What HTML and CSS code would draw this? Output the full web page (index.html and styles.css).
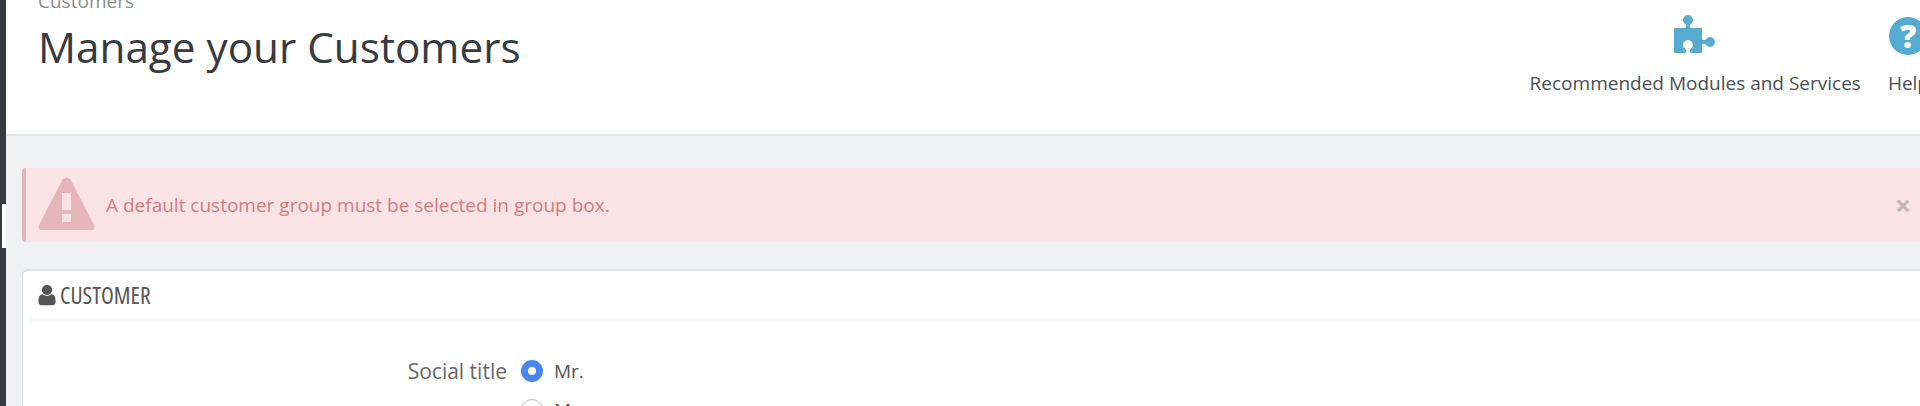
FILE: index.html
```html
<!DOCTYPE html>
<html lang="en">

<head>
    <meta charset="UTF-8">
    <title>Manage your Customers</title>
    <link rel="stylesheet" href="styles.css">
</head>

<body>
    <nav class="sidebar">
        <span class="sidebar-tab"></span>
    </nav>

    <div class="main">
        <header class="page-head">
            <div class="page-title">
                <div class="breadcrumb">Customers</div>
                <h1>Manage your Customers</h1>
            </div>
            <div class="toolbar">
                <a class="tool">
                    <svg class="tool-icon" viewBox="0 0 42 40" width="42" height="40">
                        <path fill="#55acd0" d="M0 14Q0 13 1 13H10.5Q12 13 12 11.5V9.6A5 5 0 1 1 16 9.6V11.5Q16 13 17.5 13H28V24Q28 25 29.5 25H31.4A5 5 0 1 1 31.4 29H29.5Q28 29 28 30V38H17.5Q16 38 16 36.5V34.6A5 5 0 1 0 12 34.6V36.5Q12 38 10.5 38H0Z"/>
                    </svg>
                    <span>Recommended Modules and Services</span>
                </a>
                <a class="tool">
                    <span class="help-icon">?</span>
                    <span>Help</span>
                </a>
            </div>
        </header>

        <section class="content">
            <div class="alert">
                <svg class="alert-icon" viewBox="0 0 57 53" width="57" height="53">
                    <path fill="#e4b6ba" d="M24.500 2.500Q28.500 -1 32.500 2.500L56 48Q58 53 53 53H4Q-1 53 1 48Z"/>
                    <rect x="24" y="16" width="9" height="17" fill="#fae3e4"/>
                    <rect x="24" y="37" width="9" height="8" fill="#fae3e4"/>
                </svg>
                <span class="alert-text">A default customer group must be selected in group box.</span>
                <span class="alert-close">×</span>
            </div>

            <div class="panel">
                <div class="panel-heading">
                    <svg viewBox="0 0 1792 1792" width="24" height="24">
                        <path fill="#555" d="M1536 1399q0 109-62.500 187t-150.500 78h-854q-88 0-150.500-78t-62.500-187q0-85 8.500-160.500t31.500-151.500 58.500-130 94-88.500 134.500-34.500q131 128 313 128t313-128q76 0 134.500 34.500t94 88.500 58.500 130 31.500 151.500 8.500 160.500zm-256-887q0 159-112.500 271.500t-271.500 112.500-271.500-112.500-112.500-271.500 112.500-271.500 271.500-112.500 271.500 112.500 112.500 271.500z"/>
                    </svg>
                    <span class="panel-title">CUSTOMER</span>
                </div>
                <div class="form-row">
                    <label class="form-label">Social title</label>
                    <div class="radios">
                        <div class="radio"><span class="radio-dot checked"></span>Mr.</div>
                        <div class="radio"><span class="radio-dot"></span>Mrs.</div>
                    </div>
                </div>
            </div>
        </section>
    </div>
</body>

</html>
```

FILE: styles.css
```css
* {
    box-sizing: border-box;
}

html,
body {
    height: 406px;
    margin: 0;
    overflow: hidden;
}

body {
    display: flex;
    font-family: "Open Sans", sans-serif;
    background-color: #eff1f2;
    color: #363a41;
}

.sidebar {
    position: relative;
    width: 6px;
    flex: none;
    background-color: #363a41;
}

.sidebar-tab {
    position: absolute;
    left: 2px;
    top: 204px;
    width: 4px;
    height: 44px;
    background-color: #fff;
}

.main {
    flex: 1;
    min-width: 0;
}

.page-head {
    display: flex;
    justify-content: space-between;
    height: 136px;
    background-color: #fff;
    border-bottom: 2px solid #dfe1e3;
    padding-left: 32px;
}

.breadcrumb {
    margin-top: -10px;
    font-size: 19px;
    line-height: 22px;
    color: #8a8d92;
}

.page-title h1 {
    margin: 6px 0 0;
    font-size: 42.25px;
    font-weight: 400;
    line-height: 58px;
    color: #363a41;
}

.toolbar {
    display: flex;
    gap: 27px;
    margin-right: -9px;
    padding-top: 15px;
}

.tool {
    display: flex;
    flex-direction: column;
    align-items: center;
    font-size: 19px;
    line-height: 24px;
    color: #4a4e54;
}

.tool-icon {
    display: block;
    margin-bottom: 16px;
}

.help-icon {
    width: 38px;
    height: 38px;
    margin: 2px 0 16px;
    border-radius: 50%;
    background-color: #55acd0;
    color: #fff;
    font-size: 32px;
    font-weight: 800;
    line-height: 38px;
    text-align: center;
}

.content {
    padding: 32px 0 0 16px;
}

.alert {
    display: flex;
    align-items: center;
    height: 74px;
    margin-bottom: 27px;
    padding: 0 9px 0 12px;
    border-left: 4px solid #e4b6ba;
    border-radius: 4px 0 0 4px;
    background-color: #fae3e4;
}

.alert-icon {
    flex: none;
    margin-bottom: 3px;
}

.alert-text {
    margin-left: 11px;
    flex: 1;
    font-size: 19px;
    color: #cf7c80;
}

.alert-close {
    font-size: 28px;
    font-weight: 700;
    line-height: 30px;
    color: #c3b5b8;
}

.panel {
    height: 200px;
    padding: 0 0 0 6px;
    background-color: #fff;
    border-top: 2px solid #dfe1e3;
    border-left: 1px solid #dfe1e3;
    border-radius: 6px 0 0 0;
}

.panel-heading {
    display: flex;
    align-items: center;
    gap: 1px;
    height: 50px;
    padding-left: 6px;
    border-bottom: 2px solid #eff1f2;
}

.panel-title {
    display: inline-block;
    font-size: 23.5px;
    font-stretch: 75%;
    color: #555;
}

.form-row {
    display: flex;
    align-items: flex-start;
    padding-top: 36px;
}

.form-label {
    width: 492px;
    padding-right: 14px;
    font-size: 21px;
    line-height: 28px;
    text-align: right;
    color: #666;
}

.radio {
    display: flex;
    align-items: center;
    gap: 11px;
    height: 28px;
    margin-bottom: 11px;
    font-size: 19px;
    color: #555;
}

.radio-dot {
    width: 22px;
    height: 22px;
    border: 1px solid #bbb;
    border-radius: 50%;
    background-color: #fff;
}

.radio-dot.checked {
    border: 7px solid #4a86f0;
}
```
